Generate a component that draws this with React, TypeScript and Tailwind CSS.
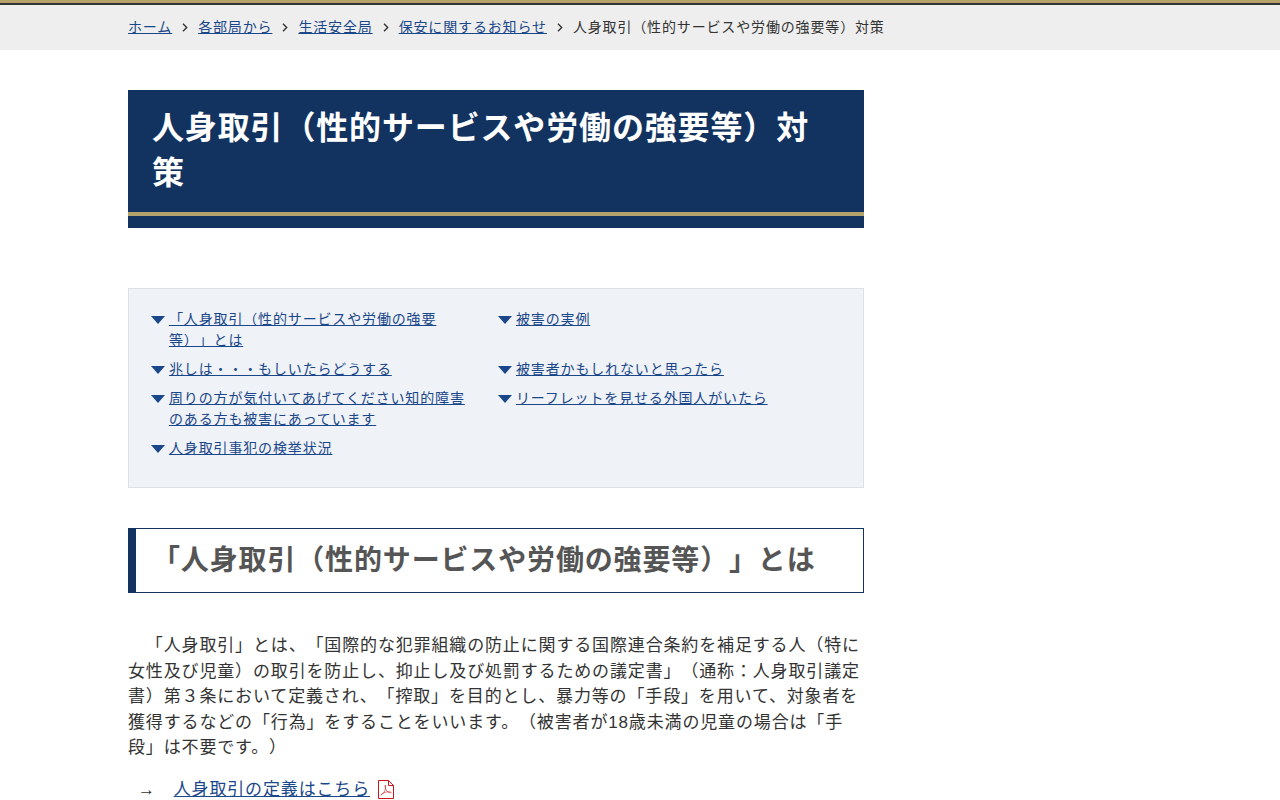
const crumbs = [
  { label: "ホーム", href: "#home" },
  { label: "各部局から", href: "#bureaus" },
  { label: "生活安全局", href: "#safety" },
  { label: "保安に関するお知らせ", href: "#notices" },
];

const sections = [
  { label: "「人身取引（性的サービスや労働の強要等）」とは", href: "#about" },
  { label: "被害の実例", href: "#cases" },
  { label: "兆しは・・・もしいたらどうする", href: "#signs" },
  { label: "被害者かもしれないと思ったら", href: "#victims" },
  { label: "周りの方が気付いてあげてください知的障害のある方も被害にあっています", href: "#notice" },
  { label: "リーフレットを見せる外国人がいたら", href: "#leaflet" },
  { label: "人身取引事犯の検挙状況", href: "#arrests" },
];

const intro =
  "　「人身取引」とは、「国際的な犯罪組織の防止に関する国際連合条約を補足する人（特に女性及び児童）の取引を防止し、抑止し及び処罰するための議定書」（通称：人身取引議定書）第３条において定義され、「搾取」を目的とし、暴力等の「手段」を用いて、対象者を獲得するなどの「行為」をすることをいいます。（被害者が18歳未満の児童の場合は「手段」は不要です。）";

function Chevron() {
  return (
    <svg className="mx-[10px] shrink-0" width="6" height="9" viewBox="0 0 6 9" fill="none" aria-hidden="true">
      <path d="M1 0.8 4.7 4.5 1 8.2" stroke="#333" strokeWidth="1.4" />
    </svg>
  );
}

function PdfIcon() {
  return (
    <svg className="ml-2 shrink-0" width="16" height="19" viewBox="0 0 16 19" fill="none" role="img" aria-label="PDF">
      <path d="M0.5 0.5H10.5L15.5 5.5V18.5H0.5Z" stroke="#c8161d" />
      <path d="M10.5 0.5V5.5H15.5" stroke="#c8161d" />
      <path
        d="M3 15.2C4.8 14.2 7 11.2 7.5 8.6C7.8 6.8 7.6 4.8 7.2 5C6.7 5.4 7.3 9.2 9 11.2C10.2 12.5 12.8 13.2 13.2 12.5C13.2 11.8 10.4 11.4 7.6 12.2C5.4 12.8 3.4 14 3 15.2Z"
        stroke="#c8161d"
        strokeWidth="0.6"
      />
    </svg>
  );
}

export default function App() {
  return (
    <div className="bg-white font-['Liberation_Sans','Noto_Sans_CJK_JP',sans-serif] text-[17px] leading-normal tracking-wider text-[#333] [text-spacing-trim:space-all]">
      {/* Breadcrumb */}
      <header className="border-t-3 border-[#b4a26c]">
        <nav aria-label="パンくず" className="border-t-2 border-[#333] bg-[#eee] py-3">
          <ol className="mx-auto flex max-w-5xl flex-wrap text-[14px] leading-[21px]">
            {crumbs.map((crumb) => (
              <li key={crumb.href} className="flex items-center">
                <a href={crumb.href} className="text-[#1a4789] underline">{crumb.label}</a>
                <Chevron />
              </li>
            ))}
            <li aria-current="page">人身取引（性的サービスや労働の強要等）対策</li>
          </ol>
        </nav>
      </header>

      <div className="mx-auto max-w-5xl pt-10">
        <main className="max-w-[736px]">
          {/* Page title */}
          <div className="bg-[#12335f] pb-3">
            <h1 className="border-b-4 border-[#b4a26c] px-6 py-4 text-[32px] leading-[45px] font-bold text-white">
              人身取引（性的サービスや労働の強要等）対策
            </h1>
          </div>

          {/* Section links */}
          <nav aria-label="目次" className="mt-15 border border-[#dde1e6] bg-[#eff2f7] py-5 pr-[18px] pl-[22px]">
            <ul className="grid grid-cols-2 text-[14px] leading-[21px]">
              {sections.map((section) => (
                <li key={section.href} className="mb-2 flex items-start gap-1 pr-6">
                  <svg className="mt-[7px] shrink-0" width="14" height="8" viewBox="0 0 14 8" aria-hidden="true">
                    <path d="M0 0H14L7 8Z" fill="#1a4789" />
                  </svg>
                  <a href={section.href} className="text-[#1a4789] underline">{section.label}</a>
                </li>
              ))}
            </ul>
          </nav>

          {/* Article */}
          <section id="about" className="mt-10">
            <h2 className="border border-l-8 border-[#12335f] px-4 py-3 text-[28px] leading-[39px] font-bold text-[#555]">
              「人身取引（性的サービスや労働の強要等）」とは
            </h2>
            <p className="mt-10">{intro}</p>
            <p className="mt-4 flex items-center pl-[10px]">
              <span>→　</span>
              <a href="#definition" className="flex items-center text-[#1a4789] underline">
                人身取引の定義はこちら
                <PdfIcon />
              </a>
            </p>
          </section>
        </main>
      </div>
    </div>
  );
}
